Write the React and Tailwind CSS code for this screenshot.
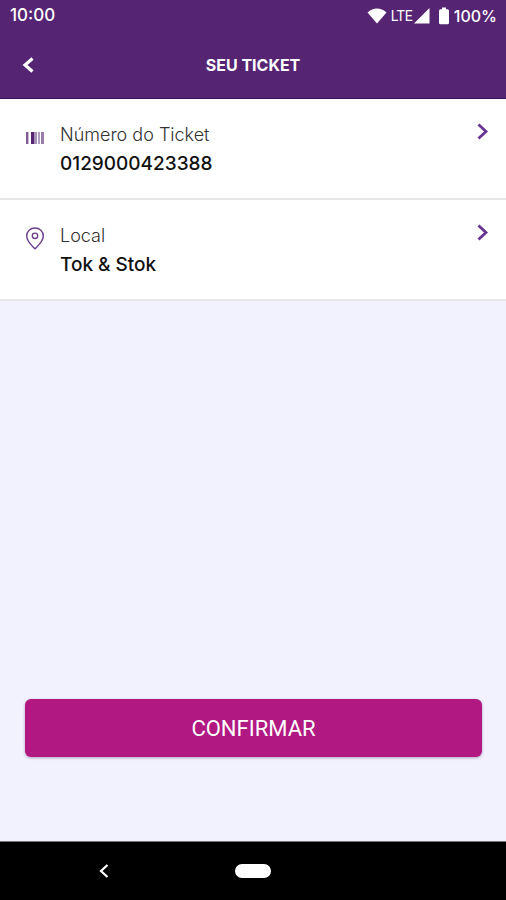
import React from 'react';

const ticketItems = [
    { id: 'number', label: 'Número do Ticket', value: '0129000423388', icon: BarcodeIcon },
    { id: 'place', label: 'Local', value: 'Tok & Stok', icon: PinIcon },
];

function BarcodeIcon() {
    return (
        <svg viewBox="0 0 20 24" className="w-5 h-6" aria-hidden="true">
            <g fill="#552473">
                <rect x="1" y="7" width="2" height="12" opacity="0.75" />
                <rect x="3" y="7" width="1" height="12" opacity="0.3" />
                <rect x="6" y="7" width="3" height="12" />
                <rect x="9" y="7" width="3" height="12" opacity="0.5" />
                <rect x="13" y="7" width="2" height="12" opacity="0.45" />
                <rect x="16" y="7" width="3" height="12" opacity="0.6" />
            </g>
        </svg>
    );
}

function PinIcon() {
    return (
        <svg viewBox="0 0 20 24" className="w-5 h-6" fill="none" stroke="#6b3d8a" strokeWidth="1.4" aria-hidden="true">
            <path d="M10 22.8C7 19.6 1.7 15.4 1.7 9.9C1.7 5.2 5.4 2 10 2s8.3 3.2 8.3 7.9c0 5.500-5.300 9.700-8.300 12.900z" />
            <circle cx="10" cy="9.800" r="2.700" />
        </svg>
    );
}

function StatusBar() {
    return (
        <div className="flex items-center justify-between h-8 pl-[10px] pr-[9px] text-base font-medium">
            <span className="text-[17px]">10:00</span>
            <div className="flex items-center">
                <svg viewBox="0 0 20 16" className="w-5 h-4" fill="currentColor" aria-hidden="true">
                    <path d="M0.500 4.500C6 -0.700 14 -0.700 19.500 4.500L10 15.500z" />
                </svg>
                <span className="ml-1 text-sm font-[Roboto] font-normal">LTE</span>
                <svg viewBox="0 0 16 16" className="w-4 h-4 ml-px" fill="currentColor" aria-hidden="true">
                    <path d="M15.500 0v15.500H0z" />
                </svg>
                <svg viewBox="0 0 12 18" className="w-3 h-[18px] ml-2" fill="currentColor" aria-hidden="true">
                    <path d="M4 0.500h4v1.700h1.500a1.500 1.500 0 0 1 1.500 1.500v12a1.500 1.500 0 0 1-1.500 1.500h-7A1.500 1.500 0 0 1 1 15.700v-12a1.500 1.500 0 0 1 1.500-1.500H4z" />
                </svg>
                <span className="ml-1">100%</span>
            </div>
        </div>
    );
}

function TicketRow({ item }) {
    const Icon = item.icon;
    return (
        <button
            type="button"
            className="w-full flex items-start pt-[22px] pb-[19px] pl-[25px] pr-4 bg-white border-b-2 border-[#e6e5e8] text-left"
        >
            <span className="pt-1">
                <Icon />
            </span>
            <span className="flex-1 flex flex-col ml-[15px]">
                <span className="text-lg leading-7 font-light text-[#333333]">{item.label}</span>
                <span className="text-[19px] leading-[30px] font-medium text-[#111111]">{item.value}</span>
            </span>
            <svg viewBox="0 0 14 18" className="w-[14px] h-[18px] mt-px" fill="none" stroke="#663591" strokeWidth="2.800" aria-hidden="true">
                <path d="M2.500 2.500L10 9.500L2.500 16.500" />
            </svg>
        </button>
    );
}

export default function App() {
    return (
        <div className="min-h-screen flex flex-col bg-[#f2f2ff] font-[Inter,sans-serif]">
            <header className="bg-[#552473] text-white border-b border-[#37105c]">
                <StatusBar />
                <div className="grid grid-cols-[1fr_auto_1fr] items-center h-[66px] px-[22px]">
                    <button type="button" aria-label="Voltar" className="w-3 h-[18px]">
                        <svg viewBox="0 0 12 18" className="w-3 h-[18px]" fill="none" stroke="currentColor" strokeWidth="3.200" aria-hidden="true">
                            <path d="M10.500 2.500L3 9L10.500 15.500" />
                        </svg>
                    </button>
                    <h1 className="text-base font-bold">SEU TICKET</h1>
                </div>
            </header>

            <main className="flex-1 flex flex-col">
                {ticketItems.map((item) => (
                    <TicketRow key={item.id} item={item} />
                ))}

                <div className="mt-auto pl-[25px] pr-6 pb-[84px]">
                    <button
                        type="button"
                        className="w-full h-[58px] rounded-md bg-[#b11882] text-white text-[22px] font-[Roboto,sans-serif] shadow-[0_1px_3px_rgba(80,40,90,0.4)]"
                    >
                        CONFIRMAR
                    </button>
                </div>
            </main>

            {/* Android navigation bar */}
            <nav className="grid grid-cols-[1fr_auto_1fr] items-center h-[59px] bg-black border-t border-[#777777]">
                <button type="button" aria-label="Voltar" className="justify-self-center mr-7">
                    <svg viewBox="0 0 10 14" className="w-[10px] h-[14px]" fill="none" stroke="#ffffff" strokeWidth="2.200" aria-hidden="true">
                        <path d="M8.500 1L2 7L8.500 13" />
                    </svg>
                </button>
                <button type="button" aria-label="Início" className="w-9 h-[14px] rounded-full bg-white" />
            </nav>
        </div>
    );
}
